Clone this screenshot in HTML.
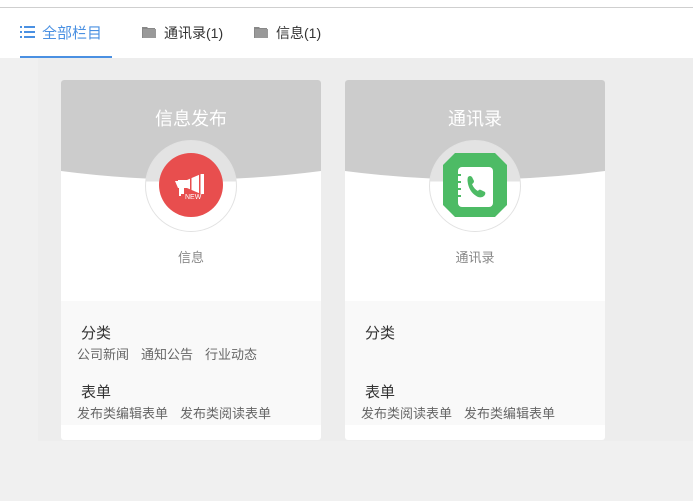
<!DOCTYPE html>
<html><head><meta charset="utf-8"><style>
*{margin:0;padding:0;box-sizing:border-box}
body{width:693px;height:501px;background:#f0f0f0;font-family:"Liberation Sans","Noto Sans CJK SC",sans-serif;position:relative;overflow:hidden}
.top{position:absolute;left:0;top:0;width:693px;height:58px;background:#fff}
.line{position:absolute;left:0;top:7px;width:693px;height:1px;background:#cfcfcf}
.tab{position:absolute;top:23px;font-size:14px;color:#333;white-space:nowrap}
.panel{position:absolute;left:38px;top:58px;width:655px;height:383px;background:#ededed}
.card{position:absolute;top:80px;width:260px;height:360px;background:#fff;border-radius:3px;overflow:hidden}
.card svg.hd{position:absolute;left:0;top:0}
.title{position:absolute;width:100%;text-align:center;color:#fff;font-size:18px}
.ring{position:absolute;left:84px;top:60px;width:92px;height:92px;border-radius:50%;border:1px solid #e2e2e2}
.lbl{position:absolute;top:167px;width:100%;text-align:center;color:#888;font-size:13px}
.sec{position:absolute;left:0;top:221px;width:260px;height:124px;background:#f9f9f9}
.h{position:absolute;left:20px;font-size:15px;color:#333}
.it{position:absolute;left:16px;font-size:13px;color:#666;white-space:nowrap}
.it span{margin-right:12px}
</style></head><body>
<div class="top"></div>
<div class="line"></div>
<div style="position:absolute;left:20px;top:56px;width:92px;height:2px;background:#4a90e2"></div>
<svg style="position:absolute;left:20px;top:26px" width="15" height="12"><g fill="#4a90e2"><rect x="0" y="0" width="2" height="2"/><rect x="0" y="5" width="2" height="2"/><rect x="0" y="10" width="2" height="2"/><rect x="4" y="0" width="11" height="2"/><rect x="4" y="5" width="11" height="2"/><rect x="4" y="10" width="11" height="2"/></g></svg>
<div class="tab" style="left:42px;color:#4a90e2;font-size:15px;top:22px">全部栏目</div>
<svg style="position:absolute;left:142px;top:26px" width="15" height="13"><path d="M0 1h5l1 1h7v10H0z" fill="#888"/><path d="M1 3h13v9H1z" fill="#999"/></svg>
<div class="tab" style="left:164px">通讯录(1)</div>
<svg style="position:absolute;left:254px;top:26px" width="15" height="13"><path d="M0 1h5l1 1h7v10H0z" fill="#888"/><path d="M1 3h13v9H1z" fill="#999"/></svg>
<div class="tab" style="left:276px">信息(1)</div>
<div class="panel"></div>

<div class="card" style="left:61px">
<svg class="hd" width="260" height="110"><path d="M0 0H260V91Q130 108 0 91Z" fill="#cccccc"/></svg>
<div class="title" style="top:25px">信息发布</div>
<div class="ring" style="background:linear-gradient(#e3e3e3 0,#e3e3e3 45%,#fff 45%)"></div>
<svg style="position:absolute;left:98px;top:73px" width="64" height="64"><circle cx="32" cy="32" r="32" fill="#e84e4e"/>
<path d="M16 28h3v-1h9l14-6h3v20h-3l-14-6h-3v6h-3v-6h-3z" fill="#fff"/><rect x="31" y="22" width="1.5" height="18" fill="#e84e4e"/><rect x="40" y="21" width="1.5" height="20" fill="#e84e4e"/><rect x="20" y="35" width="2" height="8" fill="#fff"/><text x="26" y="46" font-size="7" fill="#fff" font-family="Liberation Sans">NEW</text></svg>
<div class="lbl">信息</div>
<div class="sec">
<div class="h" style="top:21px">分类</div>
<div class="it" style="top:43px"><span>公司新闻</span><span>通知公告</span><span>行业动态</span></div>
<div class="h" style="top:80px">表单</div>
<div class="it" style="top:102px"><span>发布类编辑表单</span><span>发布类阅读表单</span></div>
</div>
</div>

<div class="card" style="left:345px">
<svg class="hd" width="260" height="110"><path d="M0 0H260V91Q130 108 0 91Z" fill="#cccccc"/></svg>
<div class="title" style="top:25px">通讯录</div>
<div class="ring" style="background:linear-gradient(#e3e3e3 0,#e3e3e3 45%,#fff 45%)"></div>
<svg style="position:absolute;left:98px;top:73px" width="64" height="64"><path d="M12 0H52L64 12V52L52 64H12L0 52V12Z" fill="#4dbb65"/>
<rect x="15" y="14" width="35" height="40" rx="4" fill="#fff"/><g fill="#4dbb65"><rect x="13" y="21" width="5" height="2"/><rect x="13" y="28" width="5" height="2"/><rect x="13" y="35" width="5" height="2"/><rect x="13" y="42" width="5" height="2"/></g>
<path d="M25 24q2-2 4 0l2 4q0 2-2 3q2 5 6 7q1-2 3-1l4 2q1 2-1 4q-2 2-6 1q-8-4-10-13q-1-5 0-7z" fill="#4dbb65"/></svg>
<div class="lbl">通讯录</div>
<div class="sec">
<div class="h" style="top:21px">分类</div>
<div class="h" style="top:80px">表单</div>
<div class="it" style="top:102px"><span>发布类阅读表单</span><span>发布类编辑表单</span></div>
</div>
</div>
</body></html>
